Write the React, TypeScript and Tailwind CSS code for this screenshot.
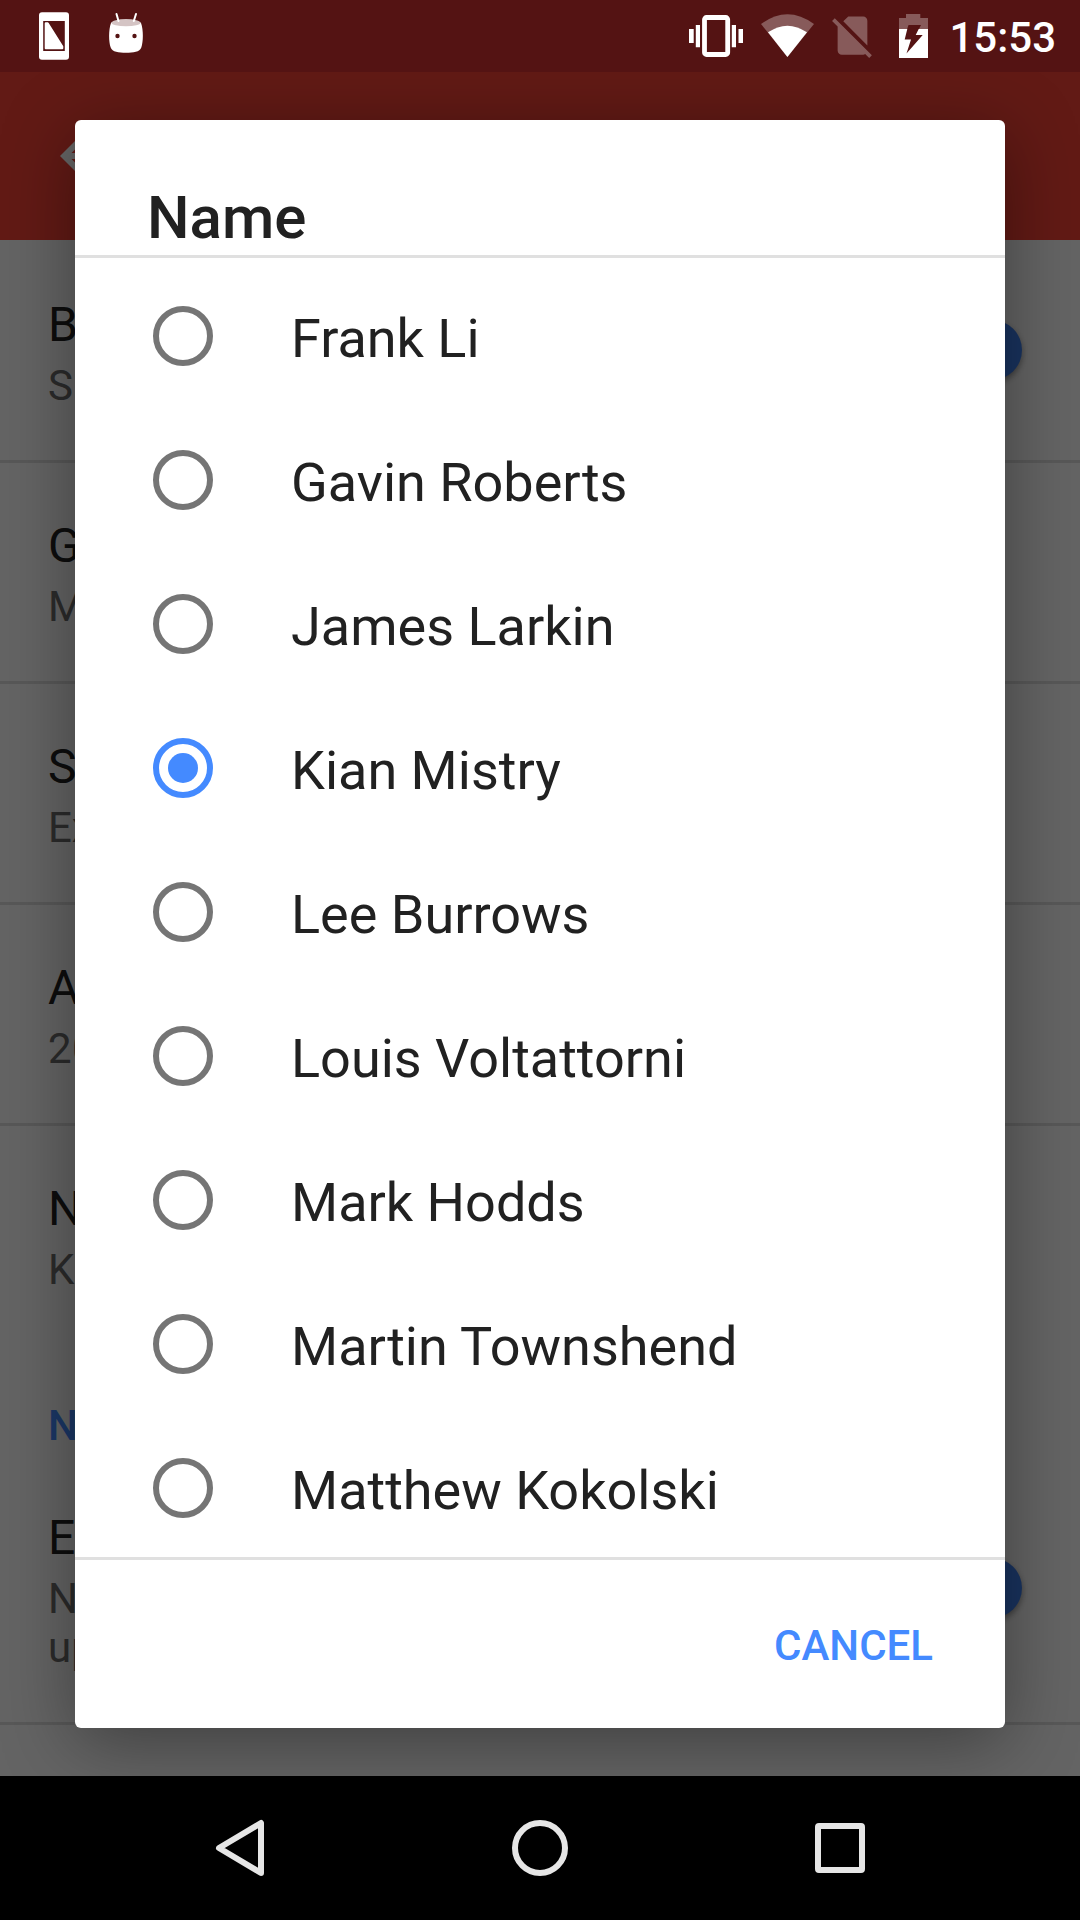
import type { ReactNode } from "react";

const names = [
  "Frank Li",
  "Gavin Roberts",
  "James Larkin",
  "Kian Mistry",
  "Lee Burrows",
  "Louis Voltattorni",
  "Mark Hodds",
  "Martin Townshend",
  "Matthew Kokolski",
];

function StatusBar() {
  return (
    <header className="flex h-[72px] shrink-0 items-start bg-[#541313] text-white">
      <svg className="ml-[36px] h-[72px] w-[36px]" viewBox="36 0 36 72">
        <path
          fillRule="evenodd"
          fill="#fff"
          d="M42 12.300h24q3 0 3 3v41.500q0 3-3 3H42q-3 0-3-3v-41.500q0-3 3-3zM43.200 21v30h21.600V21z"
        />
        <path fill="#fff" stroke="#fff" strokeWidth="2" strokeLinejoin="round" d="M45.700 23.300h2L62.300 46.500v1.700H45.700z" />
      </svg>
      <svg className="ml-[33px] h-[72px] w-[42px]" viewBox="105 0 42 72">
        <path
          fill="#fff"
          d="M111 23c4-4 26-4 30 0c2.600 7 2.300 19 .3 24.500c-1.500 4.500-8 5.300-15.300 5.300s-13.800-.8-15.300-5.300c-2-5.500-2.300-17.500.3-24.500z"
        />
        <ellipse cx="126" cy="22.700" rx="14.500" ry="3.600" fill="#d4c4c4" />
        <path stroke="#fff" strokeWidth="2" strokeLinecap="round" d="M116.500 14l2 7M136 14l-2.200 7" />
        <circle cx="117.500" cy="36" r="2.200" fill="#541313" />
        <circle cx="134.500" cy="36" r="2.200" fill="#541313" />
      </svg>
      <div className="ml-auto flex">
        <svg className="h-[72px] w-[60px]" viewBox="686 0 60 72">
          <rect x="704.5" y="17.500" width="23.200" height="37" rx="2" fill="none" stroke="#fff" strokeWidth="4.800" />
          <path fill="#fff" d="M695.800 25h4.200v22.300h-4.200zM689 29h4.700v14H689zM731.800 25h4.200v22.300h-4.200zM738.500 29h4.500v14h-4.500z" />
        </svg>
        <svg className="ml-[12px] h-[72px] w-[60px]" viewBox="758 0 60 72">
          <path fill="#fff" fillOpacity=".3" d="M787.400 57L761 24Q787.400 4.500 814 24z" />
          <path fill="#fff" d="M787.400 57L768 32.300Q787.400 19 807 32.300z" />
        </svg>
        <svg className="mt-[10px] ml-[9px] size-[51px]" viewBox="0 0 24 24">
          <path
            fill="#fff"
            fillOpacity=".3"
            d="M18.990 5c0-1.100-.89-2-1.990-2h-7L7.660 5.340 19 16.680 18.990 5zM3.650 3.880L2.380 5.150 5 7.770V19c0 1.100.9 2 2 2h10.010c.35 0 .67-.1.960-.26l1.880 1.880 1.270-1.270L3.650 3.880z"
          />
        </svg>
        <svg className="ml-[18px] h-[72px] w-[36px]" viewBox="896 0 36 72">
          <path fill="#fff" fillOpacity=".3" d="M906 14h14.300v4H928v11h-9l2-4h-12.500l-1.300 4H899V18h7z" />
          <path
            fill="#fff"
            fillRule="evenodd"
            d="M899 29h8.300l-2.600 10.500h6.300l-4.500 14L922.700 35H915.700l3-6H928v29h-29z"
          />
        </svg>
        <span className="mr-[24px] ml-[17px] pt-[13px] text-[42px] leading-[50px] font-medium">15:53</span>
      </div>
    </header>
  );
}

function Thumb() {
  return <span className="mr-[58px] mb-[2px] size-[60px] shrink-0 rounded-full bg-[#4080ee] shadow-[0_3px_6px_rgba(0,0,0,0.4)]" />;
}

type SettingProps = { title: string; summary: ReactNode; toggle?: boolean; last?: boolean };

function Setting({ title, summary, toggle, last }: SettingProps) {
  return (
    <div className={last ? "flex items-center pl-[48px]" : "flex items-center border-b-[3px] border-[#dcdcdc] pl-[48px]"}>
      <div className="flex-1 pt-[55px] pb-[50px]">
        <div className="text-[48px] leading-[56px] text-[#212121]">{title}</div>
        <div className="mt-[8px] text-[42px] leading-[49px] text-[#6b6b6b]">{summary}</div>
      </div>
      {toggle && <Thumb />}
    </div>
  );
}

function Settings() {
  return (
    <div className="flex h-full flex-col bg-[#fafafa]">
      <div className="flex h-[168px] shrink-0 items-center bg-[#f44336] pl-[48px]">
        <svg className="size-[72px]" viewBox="0 0 24 24" fill="#fff">
          <path d="M20 11H7.830l5.590-5.590L12 4l-8 8 8 8 1.410-1.410L7.830 13H20v-2z" />
        </svg>
      </div>
      <div className="pt-[2px]">
        <Setting title="B" summary="S" toggle />
        <Setting title="G" summary="M" />
        <Setting title="S" summary="Ex" />
        <Setting title="A" summary={<span className="tracking-[0.5px]">20</span>} />
        <Setting title="Name" summary="Kian Mistry" last />
        <div className="h-[111px] pt-[57px] pl-[48px] text-[42px] leading-[49px] font-medium text-[#448aff]">N</div>
        <Setting title="Ev" summary={<>N<br />up</>} toggle />
      </div>
    </div>
  );
}

function Radio({ checked }: { checked: boolean }) {
  return checked ? (
    <span className="flex size-[60px] items-center justify-center rounded-full border-[6px] border-[#448aff]">
      <span className="size-[30px] rounded-full bg-[#448aff]" />
    </span>
  ) : (
    <span className="size-[60px] rounded-full border-[6px] border-[#757575]" />
  );
}

function NameDialog() {
  return (
    <div className="flex h-[1608px] w-[930px] flex-col rounded-[6px] bg-white shadow-[0_14px_72px_rgba(0,0,0,0.38)]">
      <h1 className="h-[138px] shrink-0 border-b-[3px] border-[#e0e0e0] pt-[63px] pl-[72px] text-[60px] leading-[70px] font-medium text-[#212121]">
        Name
      </h1>
      <ul className="h-[1299px] shrink-0 overflow-hidden pt-[6px]">
        {names.map((name) => (
          <li key={name} className="flex h-[144px] items-center pl-[78px]">
            <Radio checked={name === "Kian Mistry"} />
            <span className="ml-[78px] pt-[5px] text-[54px] leading-[64px] text-[#212121]">{name}</span>
          </li>
        ))}
      </ul>
      <div className="flex h-[171px] shrink-0 justify-end border-t-[3px] border-[#e0e0e0] pt-[61px] pr-[72px]">
        <button className="h-[49px] text-[42px] leading-[49px] font-medium text-[#448aff]">CANCEL</button>
      </div>
    </div>
  );
}

function NavBar() {
  return (
    <nav className="flex h-[144px] shrink-0 items-center justify-center gap-[228px] bg-black">
      <svg className="size-[72px]" viewBox="0 0 72 72" fill="none" stroke="#e6e6e6" strokeWidth="6" strokeLinejoin="round">
        <path d="M57 11v50L15 36z" />
      </svg>
      <svg className="size-[72px]" viewBox="0 0 72 72" fill="none" stroke="#e6e6e6" strokeWidth="6">
        <circle cx="36" cy="36" r="25" />
      </svg>
      <svg className="size-[72px]" viewBox="0 0 72 72" fill="none" stroke="#e6e6e6" strokeWidth="6">
        <rect x="14" y="14" width="44" height="44" rx="1" />
      </svg>
    </nav>
  );
}

export default function App() {
  return (
    <div className="flex h-[1920px] w-[1080px] flex-col overflow-hidden font-[Roboto,sans-serif]">
      <StatusBar />
      <main className="relative min-h-0 flex-1 overflow-hidden">
        <Settings />
        <div className="absolute inset-0 flex items-center justify-center bg-black/60">
          <NameDialog />
        </div>
      </main>
      <NavBar />
    </div>
  );
}
